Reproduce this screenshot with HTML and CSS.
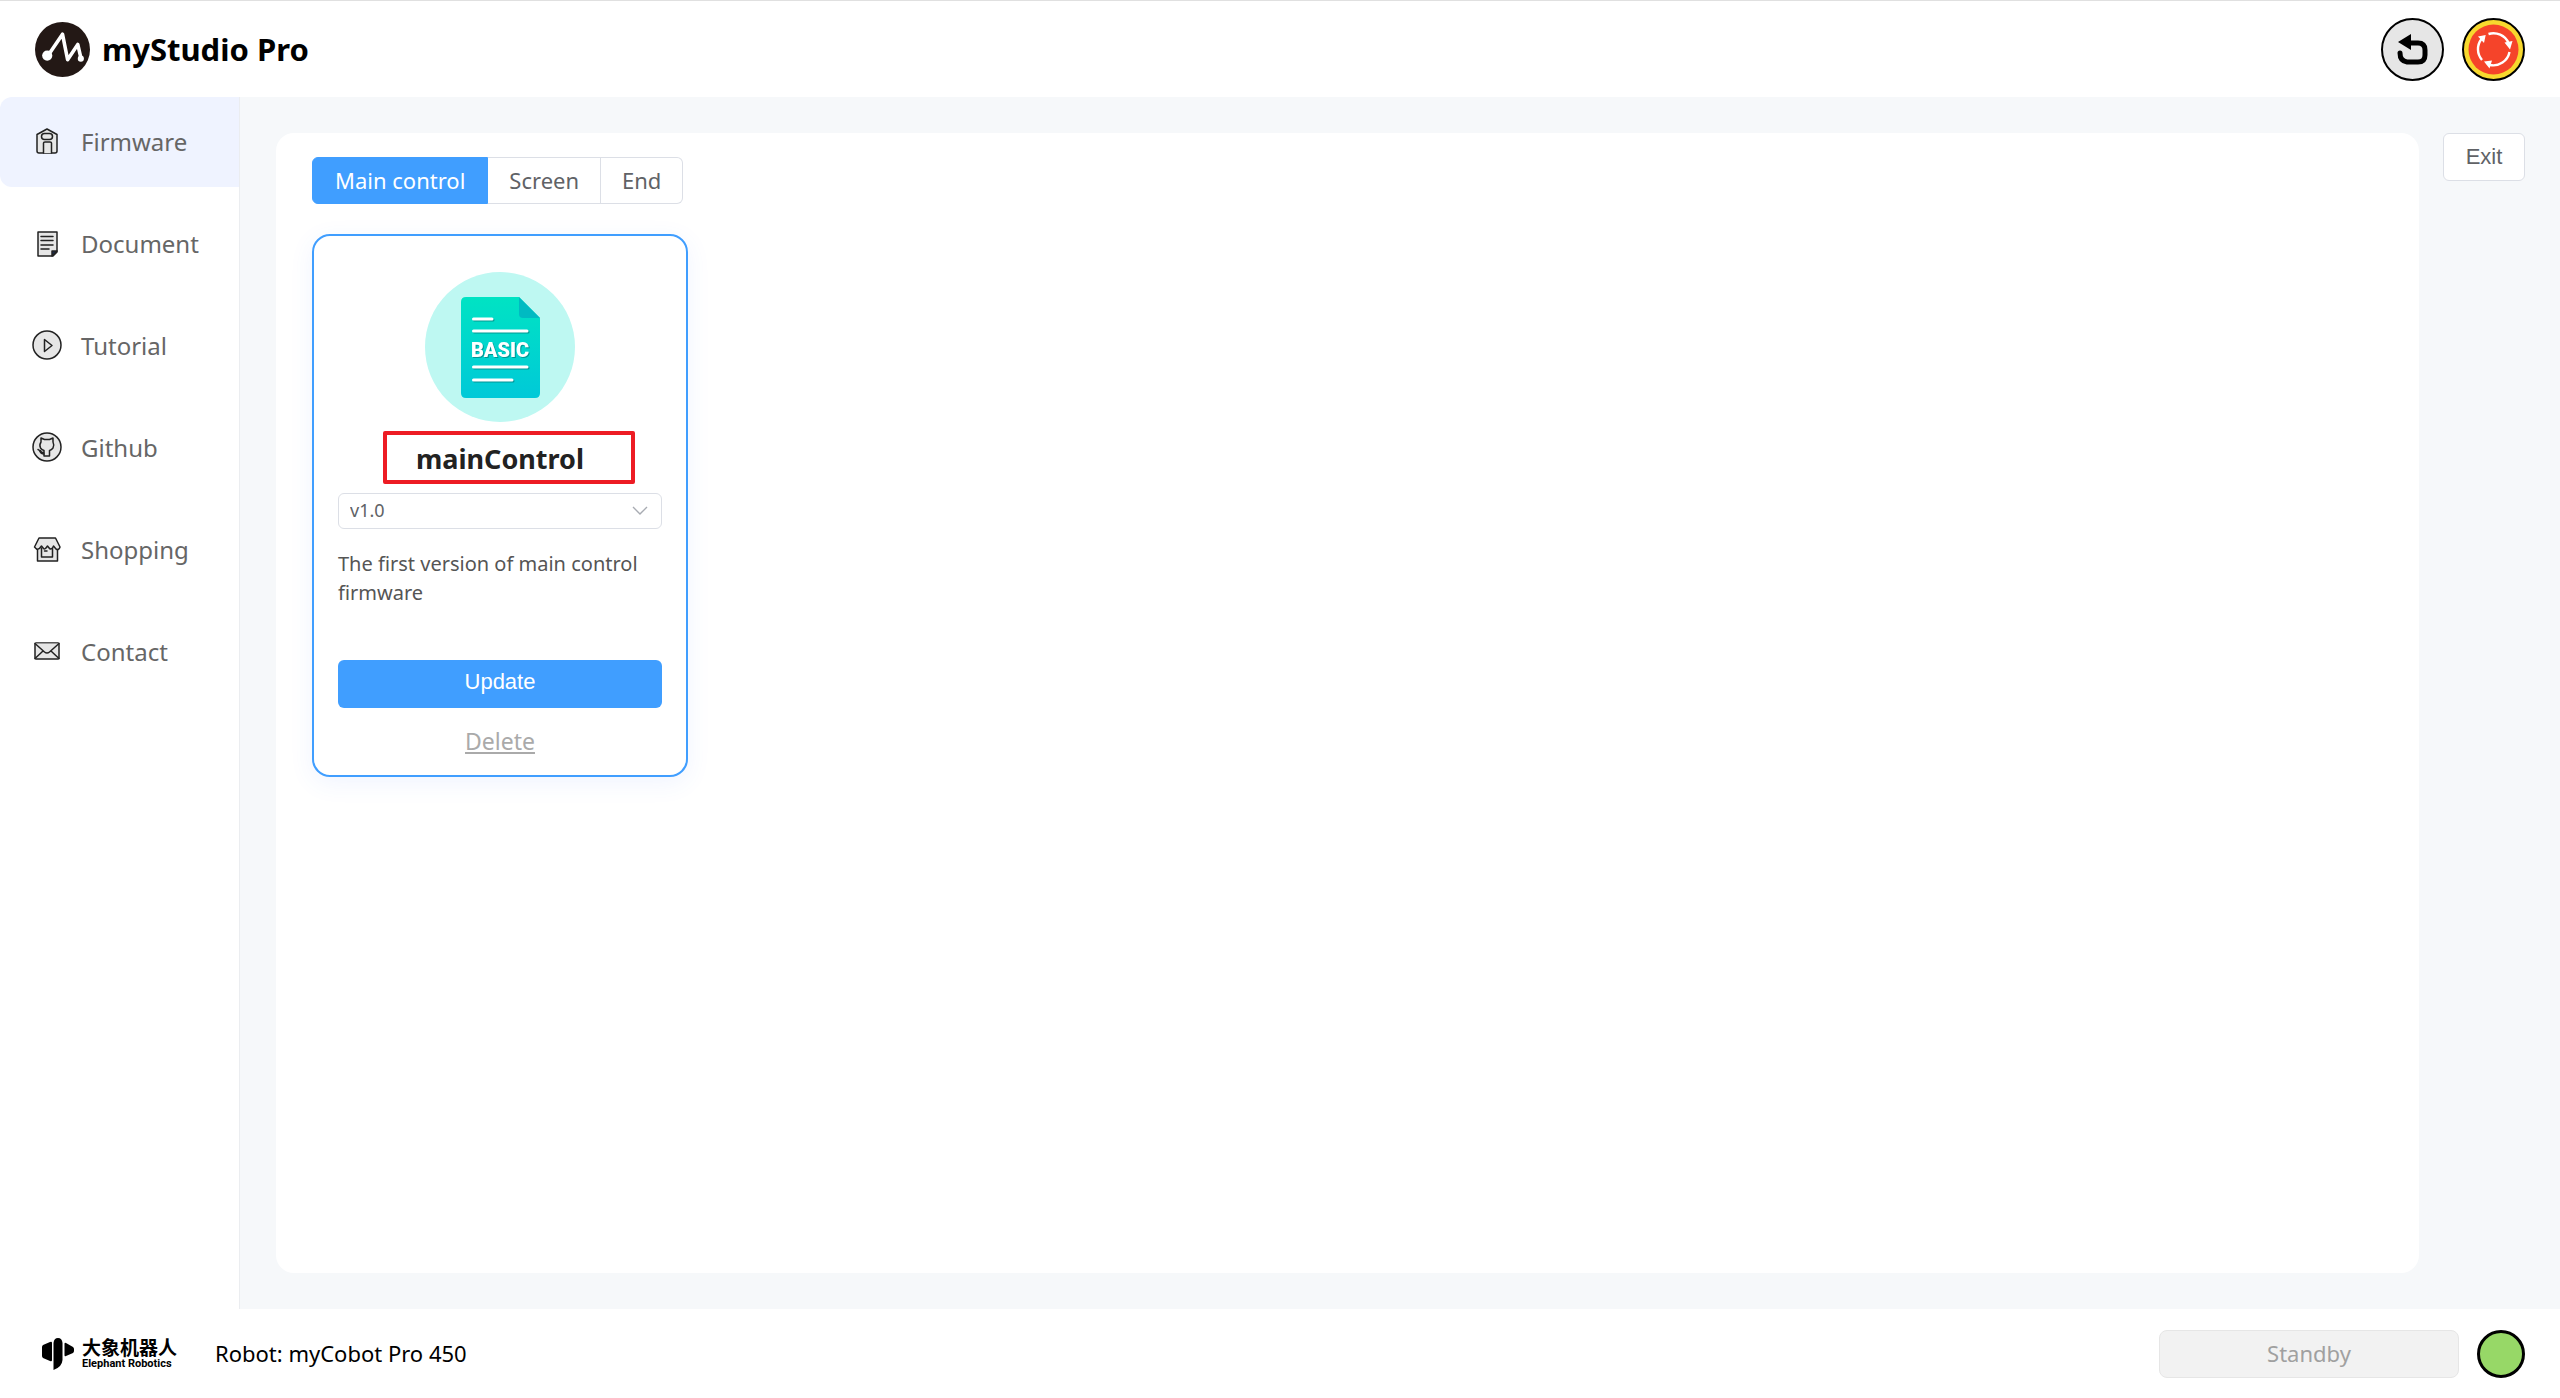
FILE: index.html
```
<!DOCTYPE html>
<html lang="en">
<head>
    <meta charset="UTF-8">
    <meta name="viewport" content="width=device-width, initial-scale=1.0">
    <title>myStudio Pro</title>
    <link rel="stylesheet" href="styles.css">
</head>
<body>
    <header class="header">
        <div class="brand">
            <svg class="brand-logo" viewBox="0 0 54 54" aria-hidden="true">
                <circle cx="27" cy="27" r="27" fill="#231815"/>
                <path d="M12 34 L27 12 L32 37 L42 22 L45 35" fill="none" stroke="#fff" stroke-width="3.500" stroke-linejoin="round"/>
                <circle cx="12" cy="33" r="5" fill="#fff"/>
                <circle cx="45" cy="36" r="3" fill="#fff"/>
            </svg>
            <h1 class="brand-name">myStudio Pro</h1>
        </div>
        <div class="header-actions">
            <button type="button" class="round-btn" aria-label="Back">
                <svg viewBox="0 0 63 63">
                    <circle cx="31.5" cy="31.5" r="30.5" fill="#e6e6e6" stroke="#000" stroke-width="2"/>
                    <path d="M28 25 H37 Q44 25 44 32 V37 Q44 44 37 44 H26 Q19 43 19 35" fill="none" stroke="#000" stroke-width="5" stroke-linecap="round"/>
                    <path d="M17 24 L30 16 V32 Z"/>
                </svg>
            </button>
            <button type="button" class="round-btn" aria-label="Emergency stop">
                <svg viewBox="0 0 63 63">
                    <circle cx="31.5" cy="31.5" r="30.5" fill="#f7d82e" stroke="#000" stroke-width="2"/>
                    <circle cx="31.5" cy="31.5" r="25" fill="#f5442a"/>
                    <g fill="none" stroke="#fff" stroke-width="2.4">
                        <path d="M26.5 16 A16.5 16.5 0 0 1 46.5 25"/>
                        <path d="M47.5 34 A16.5 16.5 0 0 1 28 47"/>
                        <path d="M20 42 A16.5 16.5 0 0 1 19.5 21"/>
                    </g>
                    <path fill="#fff" d="M42.5 24.5 L50.5 23 L48 31.5 Z M22 43.5 L30 42.5 L27.5 50.5 Z M23.7 17 L16 18.5 L22 25 Z"/>
                </svg>
            </button>
        </div>
    </header>

    <div class="layout">
        <nav class="sidebar">
            <a class="nav-item active" href="#firmware">
                <svg class="nav-icon" viewBox="0 0 30 30">
                    <path d="M5 8.500 L15 3 L25 8.500 V25 Q25 27 23 27 H7 Q5 27 5 25 Z"/>
                    <rect x="9.5" y="7.5" width="11" height="6" rx="3"/>
                    <path d="M11.5 27 V17 Q11.5 16 13 16 H18 Q19.5 16 19.5 17 V27"/>
                </svg>
                Firmware
            </a>
            <a class="nav-item" href="#document">
                <svg class="nav-icon" viewBox="0 0 30 30">
                    <path d="M6 4 H25 V24 L21 28 H6 Z"/>
                    <path d="M9 8.5 H21 M9 12.5 H21 M9 17 H21 M9 21 H17"/>
                    <path d="M25 23 H20 V28 Z" fill="#1c2c50"/>
                </svg>
                Document
            </a>
            <a class="nav-item" href="#tutorial">
                <svg class="nav-icon" viewBox="0 0 30 30">
                    <circle cx="15" cy="15" r="14"/>
                    <path d="M12.5 9.5 L20 15.5 L12.5 21.5 Z"/>
                </svg>
                Tutorial
            </a>
            <a class="nav-item" href="#github">
                <svg class="nav-icon" viewBox="0 0 30 30">
                    <circle cx="15" cy="15" r="14"/>
                    <path d="M9 6 L12.5 7.5 H17.5 L21 6 V10 Q22.5 13 21 16 Q19.5 18 17.5 18.5 V24 H12 V18.5 Q10 18 8.5 16 Q7 13 9 10 Z"/>
                    <path d="M12 22 Q9 22 8 19.5 Q7.5 18 6 17.5 M11.5 20.5 Q9.5 21 8.5 18.5"/>
                </svg>
                Github
            </a>
            <a class="nav-item" href="#shopping">
                <svg class="nav-icon" viewBox="0 0 30 30">
                    <path d="M5.5 14 V27 H25.5 V14"/>
                    <path d="M9.5 14 V23 H20.5 V14 M12.5 17 H15"/>
                    <path d="M7 4 H23.5 L28 13 Q27 16.5 24 15 L21.5 12 Q20 16 17.5 14.5 L15.5 12 Q13 16 11.5 14.5 L9.5 12 Q7 16 4.5 15 L2.5 13 Z"/>
                </svg>
                Shopping
            </a>
            <a class="nav-item" href="#contact">
                <svg class="nav-icon" viewBox="0 0 30 30">
                    <rect x="3" y="7" width="24" height="16" rx="1"/>
                    <path d="M3 7.500 L12.5 16 Q15 18 17.5 16 L27 7.500 M3 22.500 L11 15 M27 22.500 L19 15"/>
                </svg>
                Contact
            </a>
        </nav>

        <main class="main">
            <section class="panel">
                <div class="tabs">
                    <button type="button" class="tab active">Main control</button>
                    <button type="button" class="tab">Screen</button>
                    <button type="button" class="tab">End</button>
                </div>

                <article class="card">
                    <svg class="card-icon" viewBox="0 0 150 150" aria-hidden="true">
                        <defs>
                            <linearGradient id="docFill" x1="0" y1="0" x2="0" y2="1">
                                <stop offset="0" stop-color="#00e3c3"/>
                                <stop offset="1" stop-color="#00c9d8"/>
                            </linearGradient>
                        </defs>
                        <circle cx="75" cy="75" r="75" fill="#bef8f2"/>
                        <path d="M41 25 H94 L115 46 V121 Q115 126 110 126 H41 Q36 126 36 121 V30 Q36 25 41 25 Z" fill="url(#docFill)"/>
                        <path d="M94 25 L115 46 H98 Q94 46 94 42 Z" fill="#00bac2"/>
                        <g class="card-icon-lines">
                            <path d="M48.500 47 H67 M48.500 59 H102 M48.500 95 H102 M48.500 108 H87"/>
                            <text x="75" y="85" text-anchor="middle">BASIC</text>
                        </g>
                    </svg>
                    <h2 class="card-title">mainControl</h2>
                    <div class="select-box">
                        <select class="version-select" aria-label="Firmware version">
                            <option>v1.0</option>
                        </select>
                        <svg class="select-arrow" viewBox="0 0 16 16" aria-hidden="true">
                            <path d="M1 4 L8 11 L15 4"/>
                        </svg>
                    </div>
                    <p class="card-desc">The first version of main control firmware</p>
                    <button type="button" class="update-btn">Update</button>
                    <a class="delete-link" href="#delete">Delete</a>
                </article>
            </section>
            <button type="button" class="exit-btn">Exit</button>
        </main>
    </div>

    <footer class="footer">
        <div class="company">
            <svg class="company-logo" viewBox="0 0 32 32" aria-hidden="true">
                <path d="M0 9 Q0 8 1 7 L8 4 Q10 3 10 5 V22 Q10 24 8 23 L1 20 Q0 19 0 18 Z"/>
                <path d="M11.500 5 Q12 0 16 0 Q20 0 20.500 5 V22 Q20 29 11.500 32 Z"/>
                <path d="M22.500 6 Q22.500 4 24 5 L31 9 Q32 10 32 11 V13 Q32 14 31 15 L24 18 Q22.500 19 22.500 17 Z"/>
            </svg>
            <div class="company-text">
                <span class="company-cn" lang="zh-CN">大象机器人</span>
                <span class="company-en">Elephant Robotics</span>
            </div>
        </div>
        <p class="robot">Robot: myCobot Pro 450</p>
        <button type="button" class="status-btn" disabled>Standby</button>
        <span class="status-dot"></span>
    </footer>
</body>
</html>
```
FILE: styles.css
```
*, *::after {
    box-sizing: border-box;
}
body {
    margin: 0;
    min-height: 100vh;
    display: flex;
    flex-direction: column;
    background: #fff;
    color: #000;
    font-family: "Noto Sans", sans-serif;
    font-size: 22px;
}
button, select {
    font: inherit;
    cursor: pointer;
}
svg {
    display: block;
}

/* header */
.header {
    display: flex;
    align-items: center;
    justify-content: space-between;
    min-height: 97px;
    padding: 0 35px;
    border-top: 1px solid #e0e0e0;
}
.brand {
    display: flex;
    align-items: center;
    gap: 12px;
}
.brand-logo {
    width: 55px;
    height: 55px;
}
.brand-name {
    margin: 0;
    font-size: 31px;
    font-weight: 700;
    line-height: 40px;
}
.header-actions {
    display: flex;
    gap: 18px;
}
.round-btn {
    width: 63px;
    height: 63px;
    padding: 0;
    border: 0;
    border-radius: 50%;
    background: none;
}

/* sidebar */
.layout {
    flex: 1;
    display: flex;
}
.sidebar {
    display: flex;
    flex-direction: column;
    gap: 12px;
    width: 240px;
    border-right: 1px solid #ebedf0;
}
.nav-item {
    display: flex;
    align-items: center;
    gap: 19px;
    height: 90px;
    padding: 0 0 2px 32px;
    border-radius: 12px 0 0 12px;
    color: #666;
    font-size: 24px;
    text-decoration: none;
}
.nav-item.active {
    background: #eff3ff;
}
.nav-icon {
    width: 30px;
    height: 30px;
    fill: #e6e6e6;
    stroke: #222;
    stroke-width: 1.5;
    stroke-linejoin: round;
    stroke-linecap: round;
}

/* content */
.main {
    flex: 1;
    display: flex;
    align-items: flex-start;
    gap: 24px;
    padding: 36px 35px 36px 36px;
    background: #f6f8fa;
}
.panel {
    flex: 1;
    align-self: stretch;
    padding: 24px 36px;
    border-radius: 18px;
    background: #fff;
}
.tabs {
    display: flex;
}
.tab {
    height: 47px;
    padding: 0 21px 2px;
    border: 1px solid #dcdfe6;
    border-left: 0;
    background: #fff;
    color: #606266;
    line-height: 30px;
}
.tab:first-child {
    padding: 0 22px 2px;
    border-left: 1px solid #dcdfe6;
    border-radius: 6px 0 0 6px;
}
.tab:last-child {
    border-radius: 0 6px 6px 0;
}
.tab.active {
    border-color: #409eff;
    background: #409eff;
    color: #fff;
}
.exit-btn {
    width: 82px;
    height: 48px;
    border: 1px solid #dcdfe6;
    border-radius: 6px;
    background: #fff;
    color: #606266;
    font-family: "Liberation Sans", Arial, sans-serif;
}

/* firmware card */
.card {
    display: flex;
    flex-direction: column;
    width: 376px;
    margin-top: 30px;
    padding: 36px 24px 18px;
    border: 2px solid #409eff;
    border-radius: 18px;
    box-shadow: 0 6px 24px rgba(64, 110, 255, 0.08);
}
.card-icon {
    align-self: center;
    width: 150px;
    height: 150px;
}
.card-icon-lines {
    fill: #fff;
    filter: drop-shadow(1px 1px 0 rgba(0, 110, 110, 0.6));
}
.card-icon-lines path {
    stroke: #fff;
    stroke-width: 3;
    stroke-linecap: round;
}
.card-icon-lines text {
    font-family: Roboto, sans-serif;
    font-size: 20px;
    font-weight: 900;
}
.card-title {
    position: relative;
    margin: 19px 0 16px;
    color: #222;
    font-size: 27px;
    line-height: 36px;
    text-align: center;
}
/* red marker around the title */
.card-title::after {
    content: "";
    position: absolute;
    top: -10px;
    left: 45px;
    width: 252px;
    height: 53px;
    border: 4px solid #ed1c24;
    border-radius: 2px;
}
.select-box {
    display: grid;
    align-items: center;
}
.version-select {
    grid-area: 1 / 1;
    width: 100%;
    height: 36px;
    padding: 0 11px 2px;
    border: 1px solid #dcdfe6;
    border-radius: 6px;
    appearance: none;
    background: #fff;
    color: #606266;
    font-size: 18px;
}
.select-arrow {
    grid-area: 1 / 1;
    justify-self: end;
    width: 16px;
    height: 16px;
    margin-right: 14px;
    fill: none;
    stroke: #a8abb2;
    stroke-width: 1.4;
    pointer-events: none;
}
.card-desc {
    min-height: 87px;
    margin: 20px 0 24px;
    color: #555;
    font-size: 20px;
    line-height: 29px;
}
.update-btn {
    height: 48px;
    padding: 0 0 4px;
    border: 0;
    border-radius: 6px;
    background: #409eff;
    color: #fff;
    font-family: "Liberation Sans", Arial, sans-serif;
}
.delete-link {
    align-self: center;
    margin-top: 17px;
    color: #aaa;
    font-size: 23px;
    line-height: 32px;
}

/* footer */
.footer {
    display: flex;
    align-items: center;
    gap: 18px;
    min-height: 89px;
    padding: 0 35px 0 42px;
}
.company {
    display: flex;
    align-items: center;
    gap: 8px;
    margin-right: 20px;
}
.company-logo {
    width: 32px;
    height: 32px;
}
.company-text {
    display: flex;
    flex-direction: column;
    font-weight: 700;
}
.company-cn {
    font-family: "Noto Sans CJK SC", sans-serif;
    font-size: 19px;
    line-height: 20px;
}
.company-en {
    font-family: Roboto, sans-serif;
    font-size: 11px;
    line-height: 14px;
}
.robot {
    flex: 1;
    margin: 0;
    padding-bottom: 2px;
}
.status-btn {
    width: 300px;
    height: 48px;
    padding-bottom: 3px;
    border: 1px solid #e6e6e6;
    border-radius: 8px;
    background: #f2f2f2;
    color: #a0a0a0;
    cursor: default;
}
.status-dot {
    width: 48px;
    height: 48px;
    border: 3px solid #000;
    border-radius: 50%;
    background: #97d867;
}
```
